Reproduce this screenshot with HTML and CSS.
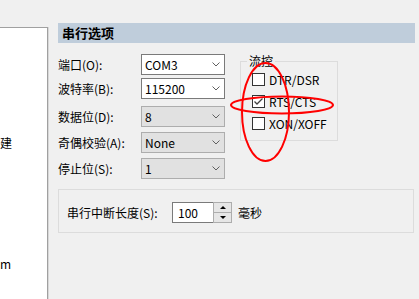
FILE: index.html
```html
<!DOCTYPE html>
<html lang="zh-CN">
<head>
  <meta charset="UTF-8" />
  <title>串行选项</title>
  <link rel="stylesheet" href="styles.css">
</head>
<body>
  <div class="window">
    <aside class="sidebar">
      <div class="side-key">建</div>
      <div class="side-tail">m</div>
    </aside>

    <main class="settings">
      <div class="section-title">串行选项</div>

      <div class="options">
        <div class="port-form">
          <div class="field">
            <label class="field-label">端口(O):</label>
            <div class="combo">
              <span>COM3</span>
              <svg class="chevron" width="8" height="5" viewBox="0 0 8 5"><polyline points="0.5,0.5 4,4 7.5,0.5" /></svg>
            </div>
          </div>
          <div class="field field-tight">
            <label class="field-label">波特率(B):</label>
            <div class="combo">
              <span>115200</span>
              <svg class="chevron" width="8" height="5" viewBox="0 0 8 5"><polyline points="0.5,0.5 4,4 7.5,0.5" /></svg>
            </div>
          </div>
          <div class="field field-wide">
            <label class="field-label">数据位(D):</label>
            <div class="combo combo-list">
              <span>8</span>
              <svg class="chevron" width="8" height="5" viewBox="0 0 8 5"><polyline points="0.5,0.5 4,4 7.5,0.5" /></svg>
            </div>
          </div>
          <div class="field">
            <label class="field-label">奇偶校验(A):</label>
            <div class="combo combo-list">
              <span>None</span>
              <svg class="chevron" width="8" height="5" viewBox="0 0 8 5"><polyline points="0.5,0.5 4,4 7.5,0.5" /></svg>
            </div>
          </div>
          <div class="field">
            <label class="field-label">停止位(S):</label>
            <div class="combo combo-list">
              <span>1</span>
              <svg class="chevron" width="8" height="5" viewBox="0 0 8 5"><polyline points="0.5,0.5 4,4 7.5,0.5" /></svg>
            </div>
          </div>
        </div>

        <fieldset class="flow">
          <legend>流控</legend>
          <label class="check"><span class="box"></span>DTR/DSR</label>
          <label class="check">
            <span class="box">
              <svg width="11" height="11" viewBox="0 0 11 11"><polyline points="1.5,5.5 4,8 9.5,2.5" /></svg>
            </span>RTS/CTS
          </label>
          <label class="check"><span class="box"></span>XON/XOFF</label>
        </fieldset>
      </div>

      <div class="break-box">
        <span class="break-label">串行中断长度(S):</span>
        <div class="spin">
          <span class="spin-value">100</span>
          <span class="spin-buttons">
            <span class="spin-btn"><span class="arrow-up"></span></span>
            <span class="spin-btn"><span class="arrow-down"></span></span>
          </span>
        </div>
        <span class="unit">毫秒</span>
      </div>
    </main>
  </div>

  <!-- red marks drawn on top of the screenshot -->
  <svg class="marks" width="419" height="299" viewBox="0 0 419 299">
    <ellipse cx="265.5" cy="112" rx="23.5" ry="49" />
    <ellipse cx="282" cy="105" rx="51" ry="8.5" />
  </svg>
</body>
</html>
```

FILE: styles.css
```css
body {
  margin: 0;
  width: 419px;
  height: 299px;
  overflow: hidden;
  position: relative;
  background-color: #f0f0f0;
  color: #000;
  font-family: "Noto Sans CJK SC", sans-serif;
  font-size: 12px;
}

.window {
  display: flex;
  height: 100%;
}

.sidebar {
  width: 47px;
  margin-top: 27px;
  background-color: #fff;
  border-top: 1px solid #a0a0a0;
  border-right: 1px solid #a0a0a0;
  box-shadow: 1px 0 0 #d8d8d8;
  overflow: hidden;
}

.side-key {
  margin-top: 107px;
  line-height: 16px;
}

.side-tail {
  margin-top: 105px;
  line-height: 16px;
}

.settings {
  margin-left: 10px;
  padding-top: 23px;
}

.section-title {
  width: 353px;
  height: 20px;
  padding-left: 4px;
  line-height: 20px;
  background-color: #bfcddb;
  font-size: 13px;
  font-weight: bold;
}

.options {
  display: flex;
  align-items: flex-start;
  margin-top: 11px;
}

.field {
  display: flex;
  align-items: center;
  height: 21px;
  margin-top: 5px;
}

.field:first-child {
  margin-top: 0;
}

.field-tight {
  margin-top: 3px;
}

.field-wide {
  margin-top: 7px;
}

.field-label {
  width: 83px;
  line-height: 21px;
}

.combo {
  box-sizing: border-box;
  width: 84px;
  height: 21px;
  display: flex;
  align-items: center;
  justify-content: space-between;
  padding: 0 4px 0 3px;
  background-color: #fff;
  border: 1px solid #7a7a7a;
}

.combo-list {
  background-color: #e1e1e1;
  border-color: #adadad;
}

.chevron polyline {
  fill: none;
  stroke: #606060;
  stroke-width: 1;
}

.flow {
  box-sizing: border-box;
  width: 98px;
  margin: 0 0 0 15px;
  padding: 5px 0 10px 11px;
  border: 1px solid #dcdcdc;
  display: flex;
  flex-direction: column;
  gap: 9px;
}

.flow legend {
  margin-left: -5px;
  padding: 0 2px;
  line-height: 14px;
}

.check {
  display: flex;
  align-items: center;
  gap: 4px;
  height: 13px;
  line-height: 13px;
}

.box {
  box-sizing: border-box;
  width: 13px;
  height: 13px;
  background-color: #fff;
  border: 1px solid #333;
}

.box svg {
  display: block;
}

.box polyline {
  fill: none;
  stroke: #404040;
  stroke-width: 1.3;
}

.break-box {
  box-sizing: border-box;
  width: 356px;
  height: 44px;
  margin-top: 10px;
  padding: 12px 0 0 8px;
  border: 1px solid #dcdcdc;
  display: flex;
  align-items: flex-start;
}

.break-label {
  width: 105px;
  line-height: 21px;
}

.spin {
  display: flex;
  height: 21px;
}

.spin-value {
  box-sizing: border-box;
  width: 41px;
  padding-left: 5px;
  line-height: 19px;
  background-color: #fff;
  border: 1px solid #7a7a7a;
  border-right: none;
}

.spin-buttons {
  display: flex;
  flex-direction: column;
  width: 19px;
}

.spin-btn {
  box-sizing: border-box;
  flex: 1;
  display: flex;
  align-items: center;
  justify-content: center;
  background-color: #e6e6e6;
  border: 1px solid #adadad;
}

.spin-btn + .spin-btn {
  border-top: none;
}

.arrow-up,
.arrow-down {
  width: 0;
  height: 0;
  border-left: 3px solid transparent;
  border-right: 3px solid transparent;
}

.arrow-up {
  border-bottom: 3px solid #000;
}

.arrow-down {
  border-top: 3px solid #000;
}

.unit {
  margin-left: 6px;
  line-height: 21px;
}

.marks {
  position: absolute;
  top: 0;
  left: 0;
  pointer-events: none;
}

.marks ellipse {
  fill: none;
  stroke: #f00;
  stroke-width: 2;
}
```
